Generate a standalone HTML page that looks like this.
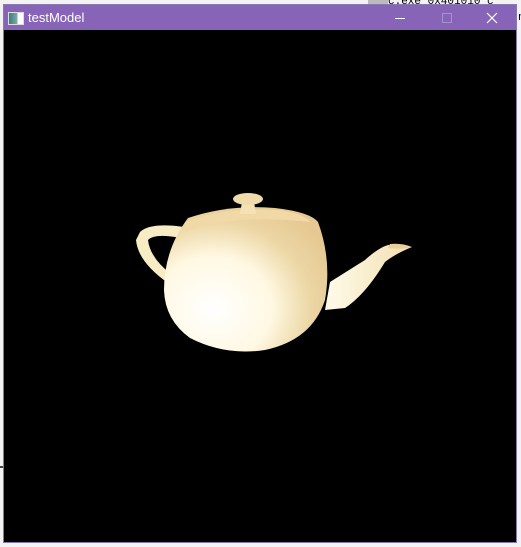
<!DOCTYPE html>
<html><head><style>
html,body{margin:0;padding:0;width:521px;height:547px;overflow:hidden;background:#f3f3f3;font-family:"Liberation Sans",sans-serif;}
.win{position:absolute;left:3px;top:4px;width:512px;height:537px;border:1px solid #8a78b0;background:#000;}
.tb{position:absolute;left:0;top:0;width:512px;height:25px;background:#8764b8;color:#fff;font-size:13px;}
.tb .t{position:absolute;left:24px;top:5px;}
.ic{position:absolute;left:4px;top:7px;width:14px;height:11px;background:linear-gradient(90deg,#3a7a8a,#7fb0a0 60%,#fff 62%);border:1px solid #ddd;}
</style></head><body>
<div style="position:absolute;left:368px;top:0;width:20px;height:5px;background:#bbb"></div>
<div style="position:absolute;left:388px;top:0;font:11px 'Liberation Mono',monospace;color:#000;line-height:8px;top:-2px">c.exe 0x401010 c</div>
<div style="position:absolute;left:518px;top:12px;font:11px 'Liberation Mono',monospace;color:#000">n</div>
<div style="position:absolute;left:0;top:466px;width:4px;height:2px;background:#444"></div>
<div class="win">
<div class="tb"><div class="ic"></div><div class="t">testModel</div>
<svg style="position:absolute;left:390px;top:7px" width="12" height="12"><line x1="1" y1="6.5" x2="11" y2="6.5" stroke="#fff" stroke-width="1"/></svg>
<svg style="position:absolute;left:437px;top:7px" width="12" height="12"><rect x="1.5" y="1.5" width="9" height="9" fill="none" stroke="#a792d0"/></svg>
<svg style="position:absolute;left:482px;top:7px" width="12" height="12"><path d="M1 1L11 11M11 1L1 11" stroke="#fff" stroke-width="1.2"/></svg>
</div>
</div>
<svg style="position:absolute;left:0;top:0" width="521" height="547">
<defs>
<radialGradient id="b" cx="0.3" cy="0.7" r="0.8"><stop offset="0" stop-color="#ffffff"/><stop offset="0.45" stop-color="#fff8e2"/><stop offset="0.75" stop-color="#ecd6a4"/><stop offset="1" stop-color="#e6c992"/></radialGradient>
<linearGradient id="s" x1="0" y1="0" x2="1" y2="0"><stop offset="0" stop-color="#fffbea"/><stop offset="1" stop-color="#f2dfb0"/></linearGradient>
</defs>
<path d="M140 232 Q150 222 185 227 L180 238 Q155 233 148 240 Q150 258 172 275 L168 283 Q138 262 136 240Z" fill="#f8ecc4"/>
<path d="M330 282 L365 260 Q378 248 388 245 L412 247 Q395 254 385 262 Q365 295 345 308 L325 310Z" fill="url(#s)"/>
<path d="M390 244 Q402 243 412 247 Q400 250 388 248Z" fill="#e8d098"/>
<path d="M188 218 Q230 204 275 208 Q310 212 318 222 Q332 260 325 300 Q312 340 265 350 Q225 356 190 338 Q165 320 164 290 Q164 250 188 218Z" fill="url(#b)"/>
<path d="M185 222 Q230 206 280 210 Q305 214 310 222 Q275 218 240 220 Q205 224 185 232Z" fill="#f0d9a6"/>
<path d="M240 214 L256 214 L254 202 L242 202Z" fill="#f4e2b4"/>
<ellipse cx="248" cy="199" rx="15" ry="6" fill="#f0dcaa"/>
</svg>
</body></html>
